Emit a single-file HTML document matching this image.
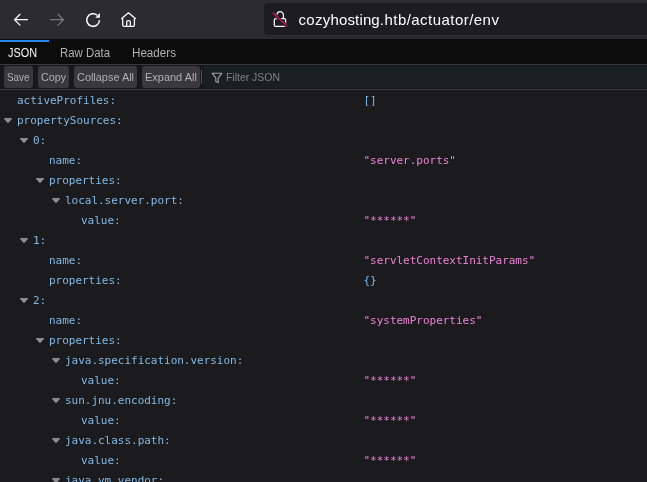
<!DOCTYPE html>
<html lang="en">
<head>
<meta charset="utf-8">
<title>cozyhosting.htb/actuator/env</title>
<style>
html,body{margin:0;padding:0;}
html{background:#1b1b1d;overflow:hidden;}
body{width:647px;height:482px;overflow:hidden;background:#1b1b1d;position:relative;font-family:"Liberation Sans",sans-serif;}
#nav{position:absolute;left:0;top:0;width:647px;height:39px;background:#2c2b32;}
#url{position:absolute;left:264px;top:3px;width:400px;height:32px;border-radius:4px;background:#1d1c22;}
#urltext{will-change:opacity;position:absolute;left:298.500px;top:10px;font-size:15px;line-height:20px;color:#fbfbfe;white-space:nowrap;letter-spacing:0.360px;}
#icons{position:absolute;left:0;top:0;}
#tabs{position:absolute;left:0;top:39px;width:647px;height:25px;background:#0c0c0d;border-bottom:1px solid #38383d;}
#tabs .sel{position:absolute;left:0;top:1px;width:49px;height:2px;background:#2388ee;}
.t{will-change:opacity;position:absolute;display:block;font-size:12px;line-height:16px;white-space:nowrap;transform-origin:0 50%;color:#b1b1b3;}
#tabs .t{top:6px;font-size:12.300px;}
#tabs .on{color:#f9f9fa;}
#tb{position:absolute;left:0;top:65px;width:647px;height:24px;background:#18181a;border-bottom:1px solid #38383d;}
.b{position:absolute;top:1px;height:22px;border-radius:3px;background:#38383d;}
#tb .t{top:4px;font-size:11.400px;}
#tb .sep{position:absolute;left:201px;top:5px;width:1px;height:14px;background:#55555a;}
#filter{position:absolute;left:203px;top:1px;width:460px;height:22px;border-radius:3px;background:#1a1f23;}
#tb .ph{color:#818187;}
#fi{position:absolute;left:211px;top:6.600px;}
#json{will-change:opacity;position:absolute;left:0;top:0;width:647px;height:482px;font-family:"DejaVu Sans Mono","Liberation Mono",monospace;font-size:11px;letter-spacing:-0.020px;}
.r{position:absolute;left:0;width:647px;height:20px;line-height:20px;white-space:nowrap;}
.r span{position:absolute;top:0;}
.k{color:#82b8e8;}
.v{left:363.5px;}
.s{color:#ec82d8;}
.o{color:#82b8e8;}
.tw{position:absolute;top:6px;width:10px;height:8px;}
</style>
</head>
<body>
<div id="json">
<div class="r" style="top:91px"><span class="k" style="left:17px">activeProfiles:</span><span class="v o">[]</span></div>
<div class="r" style="top:111px"><svg class="tw" style="left:3px" viewBox="0 0 10 8"><path d="M1.700 1.700h6.600L5 5.400z" fill="#8c8c90" stroke="#8c8c90" stroke-width="1.300" stroke-linejoin="round"/></svg><span class="k" style="left:17px">propertySources:</span></div>
<div class="r" style="top:131px"><svg class="tw" style="left:19px" viewBox="0 0 10 8"><path d="M1.700 1.700h6.600L5 5.400z" fill="#8c8c90" stroke="#8c8c90" stroke-width="1.300" stroke-linejoin="round"/></svg><span class="k" style="left:33px">0:</span></div>
<div class="r" style="top:151px"><span class="k" style="left:49px">name:</span><span class="v s">"server.ports"</span></div>
<div class="r" style="top:171px"><svg class="tw" style="left:35px" viewBox="0 0 10 8"><path d="M1.700 1.700h6.600L5 5.400z" fill="#8c8c90" stroke="#8c8c90" stroke-width="1.300" stroke-linejoin="round"/></svg><span class="k" style="left:49px">properties:</span></div>
<div class="r" style="top:191px"><svg class="tw" style="left:51px" viewBox="0 0 10 8"><path d="M1.700 1.700h6.600L5 5.400z" fill="#8c8c90" stroke="#8c8c90" stroke-width="1.300" stroke-linejoin="round"/></svg><span class="k" style="left:65px">local.server.port:</span></div>
<div class="r" style="top:211px"><span class="k" style="left:81px">value:</span><span class="v s">"******"</span></div>
<div class="r" style="top:231px"><svg class="tw" style="left:19px" viewBox="0 0 10 8"><path d="M1.700 1.700h6.600L5 5.400z" fill="#8c8c90" stroke="#8c8c90" stroke-width="1.300" stroke-linejoin="round"/></svg><span class="k" style="left:33px">1:</span></div>
<div class="r" style="top:251px"><span class="k" style="left:49px">name:</span><span class="v s">"servletContextInitParams"</span></div>
<div class="r" style="top:271px"><span class="k" style="left:49px">properties:</span><span class="v o">{}</span></div>
<div class="r" style="top:291px"><svg class="tw" style="left:19px" viewBox="0 0 10 8"><path d="M1.700 1.700h6.600L5 5.400z" fill="#8c8c90" stroke="#8c8c90" stroke-width="1.300" stroke-linejoin="round"/></svg><span class="k" style="left:33px">2:</span></div>
<div class="r" style="top:311px"><span class="k" style="left:49px">name:</span><span class="v s">"systemProperties"</span></div>
<div class="r" style="top:331px"><svg class="tw" style="left:35px" viewBox="0 0 10 8"><path d="M1.700 1.700h6.600L5 5.400z" fill="#8c8c90" stroke="#8c8c90" stroke-width="1.300" stroke-linejoin="round"/></svg><span class="k" style="left:49px">properties:</span></div>
<div class="r" style="top:351px"><svg class="tw" style="left:51px" viewBox="0 0 10 8"><path d="M1.700 1.700h6.600L5 5.400z" fill="#8c8c90" stroke="#8c8c90" stroke-width="1.300" stroke-linejoin="round"/></svg><span class="k" style="left:65px">java.specification.version:</span></div>
<div class="r" style="top:371px"><span class="k" style="left:81px">value:</span><span class="v s">"******"</span></div>
<div class="r" style="top:391px"><svg class="tw" style="left:51px" viewBox="0 0 10 8"><path d="M1.700 1.700h6.600L5 5.400z" fill="#8c8c90" stroke="#8c8c90" stroke-width="1.300" stroke-linejoin="round"/></svg><span class="k" style="left:65px">sun.jnu.encoding:</span></div>
<div class="r" style="top:411px"><span class="k" style="left:81px">value:</span><span class="v s">"******"</span></div>
<div class="r" style="top:431px"><svg class="tw" style="left:51px" viewBox="0 0 10 8"><path d="M1.700 1.700h6.600L5 5.400z" fill="#8c8c90" stroke="#8c8c90" stroke-width="1.300" stroke-linejoin="round"/></svg><span class="k" style="left:65px">java.class.path:</span></div>
<div class="r" style="top:451px"><span class="k" style="left:81px">value:</span><span class="v s">"******"</span></div>
<div class="r" style="top:471px"><svg class="tw" style="left:51px" viewBox="0 0 10 8"><path d="M1.700 1.700h6.600L5 5.400z" fill="#8c8c90" stroke="#8c8c90" stroke-width="1.300" stroke-linejoin="round"/></svg><span class="k" style="left:65px">java.vm.vendor:</span></div>
</div>
<div id="nav">
  <div id="url"></div>
  <svg id="icons" width="647" height="39" viewBox="0 0 647 39" fill="none" stroke-linecap="round" stroke-linejoin="round">
    <g stroke="#fbfbfe" stroke-width="1.250">
      <path d="M27.400 19.700H14.600M20 14.300L14.600 19.700l5.400 5.400"/>
      <path d="M99.450 20.200A6.350 6.350 0 1 1 97.200 15.150" stroke-width="1.500" stroke-linecap="butt"/>
      <path d="M99.900 13.100v4.700h-4.700z" fill="#fbfbfe" stroke="none"/>
      <path stroke-width="1.300" d="M121.650 18.600L128.450 12.800l6.900 5.800M122.700 18V24.900a1.500 1.500 0 0 0 1.500 1.500H132.900a1.500 1.500 0 0 0 1.500-1.500V18M126.700 26.400V22a1.400 1.400 0 0 1 1.400-1.400h0.800a1.400 1.400 0 0 1 1.400 1.400V26.400"/>
      <rect x="274.300" y="18.500" width="11.300" height="7.900" rx="1.500"/>
      <path d="M276.900 18.500v-3.600a3.250 3.250 0 0 1 6.500 0v3.600"/>
    </g>
    <path d="M50.600 19.700h12.800M58 14.300l5.400 5.400L58 25.100" stroke="#787780" stroke-width="1.250"/>
    <path d="M273.300 13.300L286.700 25.900" stroke="#1d1c22" stroke-width="3.200"/>
    <path d="M273.200 13.200L286.700 25.900" stroke="#b31a44" stroke-width="1.650"/>
  </svg>
  <div id="urltext"><span style="letter-spacing:0.3px">cozy</span><span style="letter-spacing:0.13px">hosting</span><span style="letter-spacing:0.46px">.htb/actuator/env</span></div>
</div>
<div id="tabs">
  <div class="sel"></div>
  <span class="t on" id="t1" style="left:8px;transform:scaleX(0.888)">JSON</span>
  <span class="t" id="t2" style="left:60px;transform:scaleX(0.927)">Raw Data</span>
  <span class="t" id="t3" style="left:132px;transform:scaleX(0.946)">Headers</span>
</div>
<div id="tb">
  <div class="b" style="left:4px;width:29px"></div>
  <div class="b" style="left:38px;width:31px"></div>
  <div class="b" style="left:74px;width:63px"></div>
  <div class="b" style="left:142px;width:58px"></div>
  <span class="t" id="b1" style="left:7px;transform:scaleX(0.863)">Save</span>
  <span class="t" id="b2" style="left:41px;transform:scaleX(0.947)">Copy</span>
  <span class="t" id="b3" style="left:76.500px;transform:scaleX(0.958)">Collapse All</span>
  <span class="t" id="b4" style="left:144.800px;transform:scaleX(0.963)">Expand All</span>
  <div class="sep"></div>
  <div id="filter"></div>
  <svg id="fi" width="12" height="12" viewBox="0 0 12 12"><path d="M1.200 1.300h9.600L7.200 5.800v4.800L4.800 9.400V5.800z" fill="none" stroke="#a4a4a8" stroke-width="1.100" stroke-linejoin="round"/></svg>
  <span class="t ph" id="b5" style="left:226px;transform:scaleX(0.916)">Filter JSON</span>
</div>
</body>
</html>
